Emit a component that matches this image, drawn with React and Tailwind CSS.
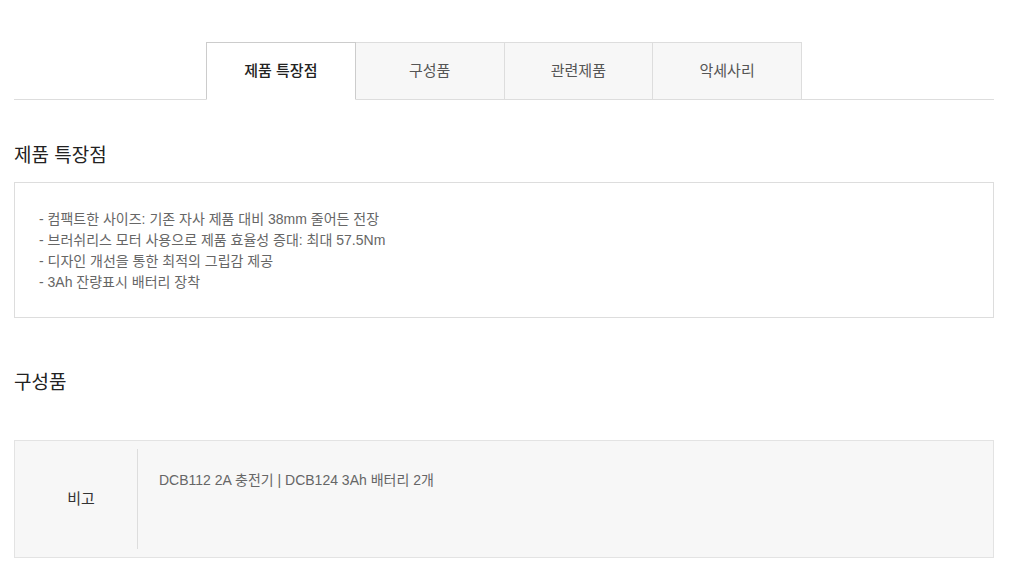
import React, { useState } from 'react';

const font = { fontFamily: '"Liberation Sans", "Noto Sans CJK KR", sans-serif' };

const tabs = ['제품 특장점', '구성품', '관련제품', '악세사리'];

const features = [
  '- 컴팩트한 사이즈: 기존 자사 제품 대비 38mm 줄어든 전장',
  '- 브러쉬리스 모터 사용으로 제품 효율성 증대: 최대 57.5Nm',
  '- 디자인 개선을 통한 최적의 그립감 제공',
  '- 3Ah 잔량표시 배터리 장착',
];

export default function App() {
  const [active, setActive] = useState(0);

  return (
    <div className="min-h-screen bg-white pt-[42px]" style={font}>
      <div className="ml-[14px] w-[980px]">
        {/* 탭 */}
        <div className="flex justify-center border-b border-[#dddddd]">
          {tabs.map((t, i) => (
            <button
              key={t}
              onClick={() => setActive(i)}
              className={`-mb-px h-[58px] w-[149.75px] border text-[15px] ${i > 0 ? '-ml-px' : ''}
                ${active === i
                  ? 'relative z-10 border-[#cccccc] border-b-white bg-white font-medium text-[#222222]'
                  : 'border-[#dddddd] bg-[#f7f7f7] text-[#555555]'}`}
            >
              {t}
            </button>
          ))}
        </div>

        {/* 제품 특장점 */}
        <h2 className="mt-[43px] text-[19px] leading-[26px] text-[#222222]">제품 특장점</h2>
        <div className="mt-[13px] border border-[#dddddd] px-[24px] pt-[26px] pb-[24px]">
          {features.map((f) => (
            <p key={f} className="text-[14px] leading-[21px] text-[#666666]">{f}</p>
          ))}
        </div>

        {/* 구성품 */}
        <h2 className="mt-[52px] text-[19px] leading-[26px] text-[#222222]">구성품</h2>
        <div className="mt-[44px] flex h-[118px] border border-[#e3e3e3] bg-[#f7f7f7] py-[8px]">
          <div className="flex w-[123px] shrink-0 items-center justify-center border-r border-[#dddddd] pl-[10px] text-[15px] text-[#333333]">
            비고
          </div>
          <div className="pl-[21px] pt-[21px] text-[14px] leading-[21px] text-[#666666]">
            DCB112 2A 충전기 | DCB124 3Ah 배터리 2개
          </div>
        </div>
      </div>
    </div>
  );
}
